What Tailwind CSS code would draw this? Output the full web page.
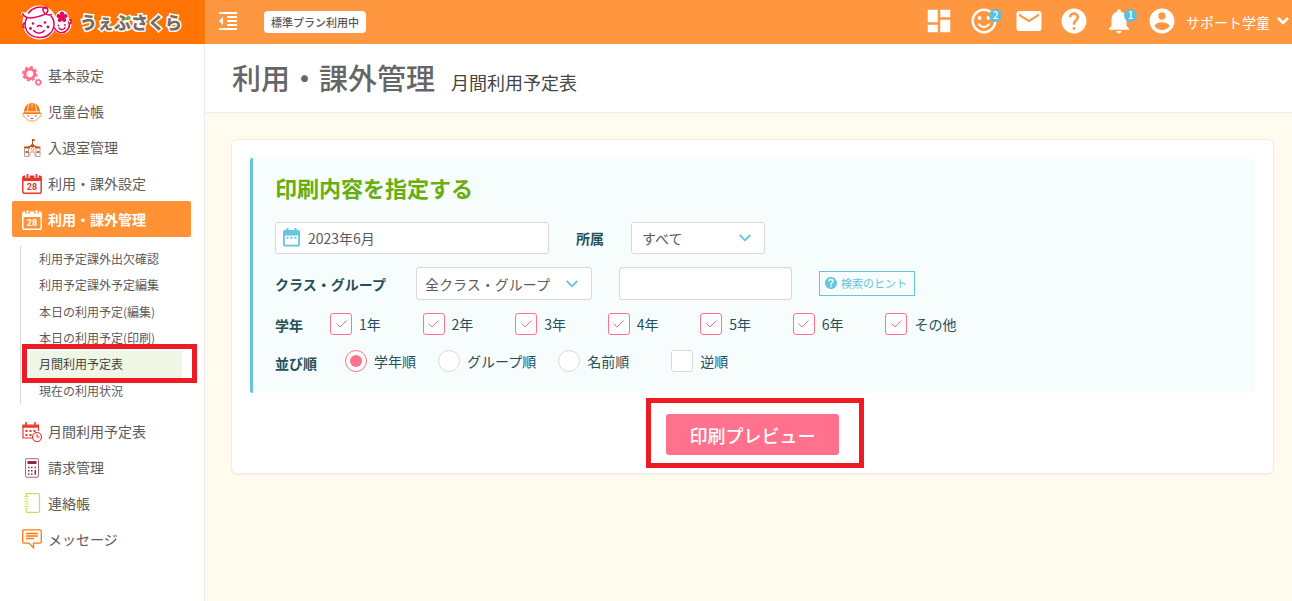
<!DOCTYPE html>
<html lang="ja">
<head>
<meta charset="utf-8">
<meta name="viewport" content="width=device-width, initial-scale=1">
<title>月間利用予定表</title>
<script src="https://cdn.jsdelivr.net/npm/@tailwindcss/browser@4"></script>
</head>
<body class="flex min-h-screen flex-col bg-[#fffbee] font-['Noto_Sans_CJK_JP',sans-serif] text-sm text-[#5b5b5b]">

<header class="flex h-11 bg-[#ff9640] text-white">
  <a href="#" class="flex w-[205px] shrink-0 items-center gap-2 bg-[#ff7404] pl-5">
    <svg class="h-[38px] w-[52px]" viewBox="0 0 52 38" fill="none" stroke-linecap="round" stroke-linejoin="round" aria-hidden="true">
      <g fill="#fff" stroke="#fff" stroke-width="3">
        <circle cx="19.500" cy="19.500" r="15.500"/><circle cx="42" cy="21.500" r="8"/><circle cx="42" cy="14" r="5"/><path d="M2.500 10.500L9 12"/>
      </g>
      <g stroke="#e5005a" stroke-width="1.500">
        <path d="M2.500 10.500c2 4 7 5 12 4 9-2 15-4 13-9-2-3-6-1-4 3 1.500 3 5 4 8 3"/>
        <path d="M7 14.500C2 23 7 34 19 34.500c9 .5 14.500-6 15-12.500 .2-4-1-7-3-9"/>
        <path d="M8.500 10c4-5.500 12-7.500 17.500-4.500M5 20c-2 0-3 3-1 5"/>
        <path d="M13.500 27.500c3 3.500 8 3.500 11 0M17.500 23.500c1-1.500 3-1.500 4 0"/>
        <path d="M34.500 25c2 4.500 7 6 11 3.500 4-3 4.500-6.500 3-9.500M49.500 17c2-1 2.500 2 .5 4M39 25c2 2.500 5 2 6-.5"/>
      </g>
      <g fill="#e5005a">
        <circle cx="13" cy="20.500" r="1.300"/><circle cx="25" cy="19.500" r="1.300"/><circle cx="10.500" cy="25.500" r="1.400"/><circle cx="28" cy="24" r="1.400"/>
        <circle cx="38.500" cy="22.500" r=".9"/><circle cx="45" cy="22" r=".9"/>
        <circle cx="42" cy="14" r="2.800"/><circle cx="42" cy="10.500" r="2.100"/><circle cx="45.400" cy="13" r="2.100"/><circle cx="44.200" cy="17" r="2.100"/><circle cx="39.800" cy="17" r="2.100"/><circle cx="38.600" cy="13" r="2.100"/>
      </g>
    </svg>
    <span class="relative text-[17px] font-black text-[#786b62] [-webkit-text-stroke:3px_white] [paint-order:stroke_fill]">うぇぶさくら
      <svg class="absolute top-[5px] left-[44px] size-[7px]" viewBox="0 0 7 7" aria-hidden="true"><path d="M.5 2.500Q2.500 2 3 5 1 5 .5 2.500zM3.500.5Q6.500 1 5.500 4.500 3 4 3.500.5z" fill="#6fba2c" stroke="#6fba2c"/></svg>
    </span>
  </a>
  <div class="flex min-w-0 flex-1 items-center">
    <button type="button" class="-mt-[2px] ml-[11px]" aria-label="メニュー">
      <svg class="size-6" viewBox="0 0 24 24" fill="currentColor"><path d="M11 17h10v-2H11v2zm-8-5l4 4V8l-4 4zm0 9h18v-2H3v2zM3 3v2h18V3H3zm8 6h10V7H11v2zm0 4h10v-2H11v2z"/></svg>
    </button>
    <span class="ml-6 flex h-[22px] items-center rounded bg-white px-[7px] pt-px text-[11px] font-medium text-[#555]">標準プラン利用中</span>
    <nav class="mb-[3px] ml-auto flex items-center gap-[15px]">
      <a href="#" aria-label="ダッシュボード"><svg class="size-[30px]" viewBox="0 0 24 24" fill="currentColor"><path d="M3 13h8V3H3v10zm0 8h8v-6H3v6zm10 0h8V11h-8v10zm0-18v6h8V3h-8z"/></svg></a>
      <a href="#" class="relative" aria-label="お知らせ"><svg class="size-[30px]" viewBox="0 0 24 24" fill="currentColor"><path d="M11.990 2C6.470 2 2 6.480 2 12s4.470 10 9.990 10C17.520 22 22 17.520 22 12S17.520 2 11.990 2zM12 20c-4.420 0-8-3.580-8-8s3.580-8 8-8 8 3.580 8 8-3.580 8-8 8zm3.500-9c.83 0 1.500-.67 1.500-1.500S16.330 8 15.500 8 14 8.670 14 9.500s.67 1.500 1.500 1.500zm-7 0c.83 0 1.500-.67 1.500-1.500S9.330 8 8.500 8 7 8.670 7 9.500 7.670 11 8.500 11zm3.500 6.500c2.330 0 4.310-1.460 5.110-3.500h-1.700c-.7 1.190-1.970 2-3.410 2s-2.720-.81-3.410-2H6.890c.8 2.040 2.780 3.500 5.110 3.500z"/></svg><span class="absolute top-[3px] -right-[3px] flex size-[13px] items-center justify-center rounded-full bg-[#5bc0de] text-[10px] leading-none font-medium">2</span></a>
      <a href="#" aria-label="メール"><svg class="size-[30px]" viewBox="0 0 24 24" fill="currentColor"><path d="M20 4H4c-1.100 0-1.990.9-1.990 2L2 18c0 1.100.9 2 2 2h16c1.100 0 2-.9 2-2V6c0-1.100-.9-2-2-2zm0 4l-8 5-8-5V6l8 5 8-5v2z"/></svg></a>
      <a href="#" aria-label="ヘルプ"><svg class="size-[30px]" viewBox="0 0 24 24" fill="currentColor"><path d="M12 2C6.480 2 2 6.480 2 12s4.480 10 10 10 10-4.480 10-10S17.520 2 12 2zm1 17h-2v-2h2v2zm2.070-7.750l-.9.920C13.450 12.900 13 13.500 13 15h-2v-.5c0-1.100.45-2.100 1.170-2.830l1.240-1.260c.37-.36.590-.86.590-1.410 0-1.100-.9-2-2-2s-2 .9-2 2H8c0-2.210 1.790-4 4-4s4 1.790 4 4c0 .88-.36 1.680-.93 2.250z"/></svg></a>
      <a href="#" class="relative" aria-label="通知"><svg class="size-[30px]" viewBox="0 0 24 24" fill="currentColor"><path d="M12 22c1.100 0 2-.9 2-2h-4c0 1.100.890 2 2 2zm6-6v-5c0-3.070-1.640-5.640-4.500-6.320V4c0-.83-.67-1.500-1.500-1.500s-1.500.67-1.500 1.500v.68C7.630 5.360 6 7.920 6 11v5l-2 2v1h16v-1l-2-2z"/></svg><span class="absolute top-[3px] -right-[3px] flex size-[13px] items-center justify-center rounded-full bg-[#5bc0de] text-[10px] leading-none font-medium">1</span></a>
      <a href="#" class="-ml-[2px]" aria-label="アカウント"><svg class="size-[30px]" viewBox="0 0 24 24" fill="currentColor"><path d="M12 2C6.480 2 2 6.480 2 12s4.480 10 10 10 10-4.480 10-10S17.520 2 12 2zm0 3c1.660 0 3 1.340 3 3s-1.340 3-3 3-3-1.340-3-3 1.340-3 3-3zm0 14.200c-2.500 0-4.710-1.280-6-3.220.03-1.990 4-3.080 6-3.080 1.990 0 5.970 1.090 6 3.080-1.290 1.940-3.500 3.220-6 3.220z"/></svg></a>
    </nav>
    <button type="button" class="mr-[3px] ml-[9px] flex items-center gap-[7px] text-sm">サポート学童
      <svg class="mb-[2px] w-3" viewBox="0 0 12 8" fill="none" stroke="currentColor" stroke-width="2.500"><path d="M1 1l5 5 5-5"/></svg>
    </button>
  </div>
</header>

<div class="flex flex-1">
  <aside class="w-[205px] shrink-0 border-r border-[#ececec] bg-white pt-[13px] pr-[13px] pl-3">
    <nav>
      <a href="#" class="flex h-9 items-center gap-[6px] pl-[10px]">
        <svg class="mt-[2px] size-5" viewBox="0 0 20 20" fill="none" stroke="#ff718c"><circle cx="7.800" cy="7.800" r="4.900" stroke-width="3"/><circle cx="7.800" cy="7.800" r="6.800" stroke-width="1.800" stroke-dasharray="3 2.340"/><circle cx="16.300" cy="16.300" r="2.300" stroke-width="1.500"/><circle cx="16.300" cy="16.300" r="3.200" stroke-width="1" stroke-dasharray="1.400 1.100"/></svg>
        基本設定</a>
      <a href="#" class="flex h-9 items-center gap-[6px] pl-[10px]">
        <svg class="mt-[2px] size-5" viewBox="0 0 20 20" fill="none"><path d="M2 10C2 4.500 5.500 1 10 1s8 3.500 8 9l1.500 2H.5z" fill="#ff7a10"/><path d="M7 2.500C6 4.500 5.700 7 5.700 9.500M13 2.500c1 2 1.300 4.500 1.300 7M10 1.500v4M2.500 9.800h15" stroke="#fff" stroke-width=".8"/><path d="M1 12c-1 2 .5 3 1.500 2.500 2 6 13 6 15 0C18.500 15 20 14 19 12" stroke="#f9a05a"/><path d="M5.500 14h1.500M13 14h1.500" stroke="#a33" stroke-width="1.200"/><path d="M8.500 16.500h3" stroke="#e44"/></svg>
        児童台帳</a>
      <a href="#" class="flex h-9 items-center gap-[6px] pl-[10px]">
        <svg class="mt-[2px] size-5" viewBox="0 0 20 20" fill="none"><path d="M10.500 1v5" stroke="#b5532a"/><path d="M11 1l3 1-3 1.300z" fill="#d33"/><path d="M4.500 9c3-.5 5-2.500 6-4 1 1.500 3 3.500 6 4z" fill="#c8500f"/><path d="M2 9.500h6M13 9.500h5.500" stroke="#c8500f" stroke-width="2"/><path d="M2.500 11v7.500h4V10.500M18 11v7.500h-4V10.500M8 18.500v-4.500h5v4.500" stroke="#c69a88"/><circle cx="10.500" cy="11" r="1.500" stroke="#c69a88"/><path d="M3.500 14h2.500M15 14h2.500" stroke="#b06a20" stroke-width="2"/></svg>
        入退室管理</a>
      <a href="#" class="flex h-9 items-center gap-[6px] pl-[10px]">
        <svg class="mt-[2px] size-5" viewBox="0 0 20 20"><rect x=".8" y="2.300" width="18.400" height="17" rx="1.500" fill="none" stroke="#e8382a" stroke-width="1.500"/><path d="M.8 2.300h18.400V7H.8z" fill="#e8382a"/><path d="M5.500 0v4M14.500 0v4" stroke="#fff" stroke-width="4.200"/><path d="M5.500 .8v3M14.500 .8v3" stroke="#e8382a" stroke-width="1.800" stroke-linecap="round"/><text x="10" y="15.800" text-anchor="middle" font-family="Roboto,sans-serif" font-size="9" font-weight="700" fill="#e8382a">28</text></svg>
        利用・課外設定</a>
      <a href="#" aria-current="page" class="flex h-9 items-center gap-[6px] rounded-xs bg-[#ff9235] pl-[10px] font-bold text-white">
        <svg class="mt-[2px] size-5" viewBox="0 0 20 20"><rect x=".8" y="2.300" width="18.400" height="17" rx="1.500" fill="none" stroke="#fff" stroke-width="1.500"/><path d="M.8 2.300h18.400V7H.8z" fill="#fff"/><path d="M5.500 0v4M14.500 0v4" stroke="#ff9235" stroke-width="4.200"/><path d="M5.500 .8v3M14.500 .8v3" stroke="#fff" stroke-width="1.800" stroke-linecap="round"/><text x="10" y="15.800" text-anchor="middle" font-family="Roboto,sans-serif" font-size="9" font-weight="700" fill="#fff">28</text></svg>
        利用・課外管理</a>
      <div class="mt-[9px] mr-[9px] mb-[9px] ml-2 grid h-[158px] grid-rows-6 border-l border-[#d8d8d8] pl-[9px] text-xs">
        <a href="#" class="flex items-center pl-[9px]">利用予定課外出欠確認</a>
        <a href="#" class="flex items-center pl-[9px]">利用予定課外予定編集</a>
        <a href="#" class="flex items-center pl-[9px]">本日の利用予定(編集)</a>
        <a href="#" class="flex items-center pl-[9px]">本日の利用予定(印刷)</a>
        <a href="#" aria-current="page" class="relative flex items-center bg-[#eff6e4] pl-[9px] text-[#444]">月間利用予定表
          <span class="absolute -top-[7px] -right-[15px] -bottom-[5px] -left-2 border-[5px] border-[#ed1c24]"></span></a>
        <a href="#" class="flex items-center pl-[9px]">現在の利用状況</a>
      </div>
      <a href="#" class="flex h-9 items-center gap-[6px] pl-[10px]">
        <svg class="mt-[2px] size-5" viewBox="0 0 20 20" fill="none" stroke="#e8382a"><path d="M10 16H1V3h15.500v6" stroke-width="1.200"/><path d="M.5 4.500h16.500" stroke-width="2.500"/><path d="M4 0v4M13 0v4" stroke-width="1.600"/><path d="M3.500 9h2M7.500 9h2M11.500 9h2M3.500 13h2M7.500 13h2" stroke-width="2"/><circle cx="15" cy="15" r="4.500" fill="#fff" stroke-width="1.200"/><path d="M15 12v3h2.500"/></svg>
        月間利用予定表</a>
      <a href="#" class="flex h-9 items-center gap-[6px] pl-[10px]">
        <svg class="mt-[2px] size-5" viewBox="0 0 20 20" fill="none" stroke="#8e2a4c"><rect x="3.500" y=".7" width="13" height="18.600" rx="1.500" stroke="#a8657c"/><path d="M5.500 4.500h9" stroke-width="3"/><path d="M6 9.500h1.500M9 9.500h1.500M12.500 9.500H14M6 12.700h1.500M9 12.700h1.500M6 16h1.500M9 16h1.500" stroke-width="1.500"/><path d="M13.300 12v4.700" stroke-width="1.500"/></svg>
        請求管理</a>
      <a href="#" class="flex h-9 items-center gap-[6px] pl-[10px]">
        <svg class="size-5" viewBox="0 0 20 20" fill="none" stroke="#c5dc6a"><path d="M4.500 3V.7h11.500q1.500 0 1.500 1.500v15.600q0 1.500-1.500 1.500H4.500V17" stroke-width="1.200"/><path d="M2.500 3.500h4M2.500 6h4M2.500 8.500h4M2.500 11h4M2.500 13.500h4M2.500 16h4" stroke-width="1.200"/></svg>
        連絡帳</a>
      <a href="#" class="flex h-9 items-center gap-[6px] pl-[10px]">
        <svg class="size-5" viewBox="0 0 20 20" fill="none" stroke="#ff7a10" stroke-width="1.300"><path d="M2 .9h16q1.300 0 1.300 1.300v10.600q0 1.300-1.300 1.300h-6.500v4.700L7 14.100H2Q.7 14.100.7 12.800V2.200Q.7.9 2 .9z"/><path d="M4 4.500h12M4 7h12M4 9.500h8"/></svg>
        メッセージ</a>
    </nav>
  </aside>

  <div class="min-w-0 flex-1">
    <div class="flex h-[69px] items-center gap-4 border-b border-[#ececec] bg-white pl-[27px]">
      <h1 class="text-[29px] font-medium text-[#666]">利用・課外管理</h1>
      <p class="pt-[7px] text-lg text-[#444]">月間利用予定表</p>
    </div>

    <main class="pt-[26px] pr-[18px] pl-[26px]">
      <form class="rounded-md border border-[#f1ece0] bg-white p-[18px] shadow-xs">
        <section class="rounded-xs border-l-3 border-[#65c5df] bg-[#f7fdfd] px-[22px] pt-[11px] pb-[21px] text-[#25505b]">
          <h2 class="text-[22px] leading-9 font-bold text-[#68ae0f]">印刷内容を指定する</h2>

          <div class="mt-[17px] flex items-center gap-[27px]">
            <div class="grid w-[274px] items-center">
              <input aria-label="対象月" type="text" value="2023年6月" class="col-start-1 row-start-1 h-8 w-full rounded-[3px] border border-[#d9d9d9] bg-white pl-8 text-[#5b5b5b]">
              <svg class="pointer-events-none col-start-1 row-start-1 mb-[2px] ml-2 h-[19px] w-[17px]" viewBox="0 0 17 19"><path d="M2 2h13q2 0 2 2v13q0 1.500-2 1.500H2Q0 18.500 0 17V4q0-2 2-2z" fill="#65c5df"/><path d="M1.800 7.500h13.400v9.200H1.800z" fill="#fff"/><path d="M4.500 0v3M12.500 0v3" stroke="#65c5df" stroke-width="2"/><path d="M3.500 9.700h2M7.500 9.700h2M11.500 9.700h2" stroke="#65c5df" stroke-width="2"/></svg>
            </div>
            <label for="belong" class="w-7 font-bold whitespace-nowrap">所属</label>
            <div class="grid w-[134px] items-center">
              <select id="belong" class="col-start-1 row-start-1 h-8 w-full appearance-none rounded-[3px] border border-[#d9d9d9] bg-white pl-[10px] text-[#5b5b5b]"><option>すべて</option></select>
              <svg class="pointer-events-none col-start-1 row-start-1 mr-[14px] w-3 justify-self-end" viewBox="0 0 12 8" fill="none" stroke="#65c5df" stroke-width="1.800"><path d="M.7 1L6 6.300 11.300 1"/></svg>
            </div>
          </div>

          <div class="mt-[13px] flex items-center gap-[27px]">
            <label for="group" class="w-[114px] font-bold">クラス・グループ</label>
            <div class="grid w-44 items-center">
              <select id="group" class="col-start-1 row-start-1 h-[33px] w-full appearance-none rounded-[3px] border border-[#d9d9d9] bg-white pl-2 text-[#5b5b5b]"><option>全クラス・グループ</option></select>
              <svg class="pointer-events-none col-start-1 row-start-1 mr-[14px] w-3 justify-self-end" viewBox="0 0 12 8" fill="none" stroke="#65c5df" stroke-width="1.800"><path d="M.7 1L6 6.300 11.300 1"/></svg>
            </div>
            <input type="text" aria-label="検索" class="h-[33px] w-[173px] rounded-[3px] border border-[#d9d9d9] bg-white px-2 inset-shadow-xs">
            <button type="button" class="flex h-[25px] w-24 items-center gap-1 border border-[#65c5df] px-[5px] text-[11px] whitespace-nowrap text-[#65c5df]">
              <svg class="mb-[2px] size-3" viewBox="2 2 20 20" fill="currentColor"><path d="M12 2C6.480 2 2 6.480 2 12s4.480 10 10 10 10-4.480 10-10S17.520 2 12 2zm1.300 17h-2.600v-2.500h2.600v2.500zm2.070-7.750l-.9.920C13.450 12.900 13.300 13.500 13.300 15h-2.600v-.5c0-1.100.45-2.100 1.170-2.830l1.240-1.260c.37-.36.590-.86.590-1.410 0-1-.7-1.700-1.700-1.700s-1.700.7-1.700 1.700H7.500c0-2.500 2-4.400 4.500-4.400s4.500 1.900 4.500 4.400c0 .88-.56 1.680-1.130 2.250z"/></svg>
              検索のヒント</button>
          </div>

          <fieldset aria-labelledby="grade" class="mt-[13px] flex h-[22px] items-start">
            <span id="grade" class="w-[55px] pt-[2px] font-bold">学年</span>
            <div class="grid w-[648px] grid-cols-7">
              <label class="flex items-center gap-[7px] whitespace-nowrap"><span class="grid place-items-center"><input type="checkbox" checked class="col-start-1 row-start-1 size-[22px] appearance-none rounded-[3px] border border-[#ff718c] bg-white"><svg class="col-start-1 row-start-1 w-[11px]" viewBox="0 0 11 8" fill="none" stroke="#ff718c"><path d="M.5 3.500L4 7 10.500.5"/></svg></span>1年</label>
              <label class="flex items-center gap-[7px] whitespace-nowrap"><span class="grid place-items-center"><input type="checkbox" checked class="col-start-1 row-start-1 size-[22px] appearance-none rounded-[3px] border border-[#ff718c] bg-white"><svg class="col-start-1 row-start-1 w-[11px]" viewBox="0 0 11 8" fill="none" stroke="#ff718c"><path d="M.5 3.500L4 7 10.500.5"/></svg></span>2年</label>
              <label class="flex items-center gap-[7px] whitespace-nowrap"><span class="grid place-items-center"><input type="checkbox" checked class="col-start-1 row-start-1 size-[22px] appearance-none rounded-[3px] border border-[#ff718c] bg-white"><svg class="col-start-1 row-start-1 w-[11px]" viewBox="0 0 11 8" fill="none" stroke="#ff718c"><path d="M.5 3.500L4 7 10.500.5"/></svg></span>3年</label>
              <label class="flex items-center gap-[7px] whitespace-nowrap"><span class="grid place-items-center"><input type="checkbox" checked class="col-start-1 row-start-1 size-[22px] appearance-none rounded-[3px] border border-[#ff718c] bg-white"><svg class="col-start-1 row-start-1 w-[11px]" viewBox="0 0 11 8" fill="none" stroke="#ff718c"><path d="M.5 3.500L4 7 10.500.5"/></svg></span>4年</label>
              <label class="flex items-center gap-[7px] whitespace-nowrap"><span class="grid place-items-center"><input type="checkbox" checked class="col-start-1 row-start-1 size-[22px] appearance-none rounded-[3px] border border-[#ff718c] bg-white"><svg class="col-start-1 row-start-1 w-[11px]" viewBox="0 0 11 8" fill="none" stroke="#ff718c"><path d="M.5 3.500L4 7 10.500.5"/></svg></span>5年</label>
              <label class="flex items-center gap-[7px] whitespace-nowrap"><span class="grid place-items-center"><input type="checkbox" checked class="col-start-1 row-start-1 size-[22px] appearance-none rounded-[3px] border border-[#ff718c] bg-white"><svg class="col-start-1 row-start-1 w-[11px]" viewBox="0 0 11 8" fill="none" stroke="#ff718c"><path d="M.5 3.500L4 7 10.500.5"/></svg></span>6年</label>
              <label class="flex items-center gap-[7px] whitespace-nowrap"><span class="grid place-items-center"><input type="checkbox" checked class="col-start-1 row-start-1 size-[22px] appearance-none rounded-[3px] border border-[#ff718c] bg-white"><svg class="col-start-1 row-start-1 w-[11px]" viewBox="0 0 11 8" fill="none" stroke="#ff718c"><path d="M.5 3.500L4 7 10.500.5"/></svg></span>その他</label>
            </div>
          </fieldset>

          <fieldset aria-labelledby="order" class="mt-[15px] flex h-[22px] items-start">
            <span id="order" class="w-[70px] pt-[3px] font-bold">並び順</span>
            <div class="flex items-center gap-[22px]">
              <label class="flex items-center gap-[7px]"><span class="grid place-items-center"><input type="radio" name="order" checked class="col-start-1 row-start-1 size-[22px] appearance-none rounded-full border border-[#ff718c] bg-white"><span class="col-start-1 row-start-1 size-3 rounded-full bg-[#ff718c]"></span></span>学年順</label>
              <label class="flex items-center gap-[7px]"><input type="radio" name="order" class="size-[22px] appearance-none rounded-full border border-[#d9d9d9] bg-white">グループ順</label>
              <label class="flex items-center gap-[7px]"><input type="radio" name="order" class="size-[22px] appearance-none rounded-full border border-[#d9d9d9] bg-white">名前順</label>
              <label class="ml-5 flex items-center gap-[7px]"><input type="checkbox" class="size-[22px] appearance-none rounded-[3px] border border-[#d9d9d9] bg-white">逆順</label>
            </div>
          </fieldset>
        </section>

        <div class="mt-[21px] flex justify-center">
          <div class="relative">
            <button type="submit" class="h-[41px] w-[173px] rounded-[3px] bg-[#ff718c] text-lg font-medium text-white">印刷プレビュー</button>
            <span class="pointer-events-none absolute -top-4 -right-[25px] -bottom-[13px] -left-5 border-[5px] border-[#ed1c24]"></span>
          </div>
        </div>
      </form>
    </main>
  </div>
</div>
</body>
</html>
